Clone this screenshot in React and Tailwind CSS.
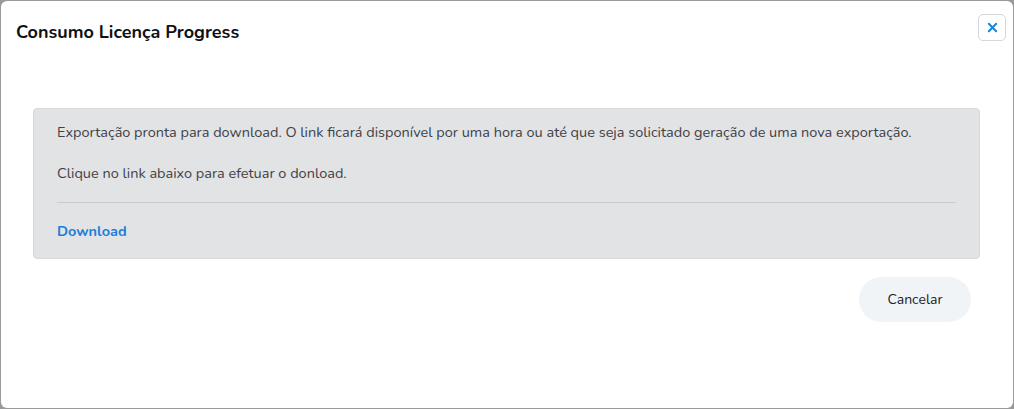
import React from 'react'

const App = () => {
  return (
    <div className="w-[1014px] h-[409px] bg-[#9a9a9a] p-px" style={{ fontFamily: 'Nunito, Lato, "Open Sans", sans-serif' }}>
      <div className="h-full bg-white rounded-[6px] flex flex-col">
        <div className="flex items-start justify-between pl-[15px] pr-[7px] pt-[13px]">
          <h2 className="text-[18px] font-bold text-[#111] leading-[36px]">Consumo Licença Progress</h2>
          <button className="w-[28px] h-[27px] border border-[#d4d7db] rounded-[5px] flex items-center justify-center text-[#1a86d9]">
            <svg width="11" height="11" viewBox="0 0 12 12">
              <path d="M2 2 L10 10 M10 2 L2 10" stroke="currentColor" strokeWidth="2.2" strokeLinecap="round" />
            </svg>
          </button>
        </div>

        <div className="mt-[58px] mx-[32px] mr-[33px] bg-[#e2e3e5] border border-[#d6d8db] rounded-[4px] px-[23px] pt-[13px] pb-[15px] text-[14.5px] text-[#3f4145]">
          <p className="leading-[20px]">
            Exportação pronta para download. O link ficará disponível por uma hora ou até que seja solicitado geração de uma nova exportação.
          </p>
          <p className="leading-[20px] mt-[21px]">Clique no link abaixo para efetuar o donload.</p>
          <div className="border-t border-[#c9cbce] mt-[19px] mb-[18px]"></div>
          <a href="#" className="text-[#1a7fd9] font-bold leading-[20px]">Download</a>
        </div>

        <div className="flex justify-end pr-[42px] mt-[18px]">
          <button className="w-[112px] h-[45px] rounded-full bg-[#f1f4f7] text-[14px] text-[#222]">Cancelar</button>
        </div>
      </div>
    </div>
  )
}

export default App
